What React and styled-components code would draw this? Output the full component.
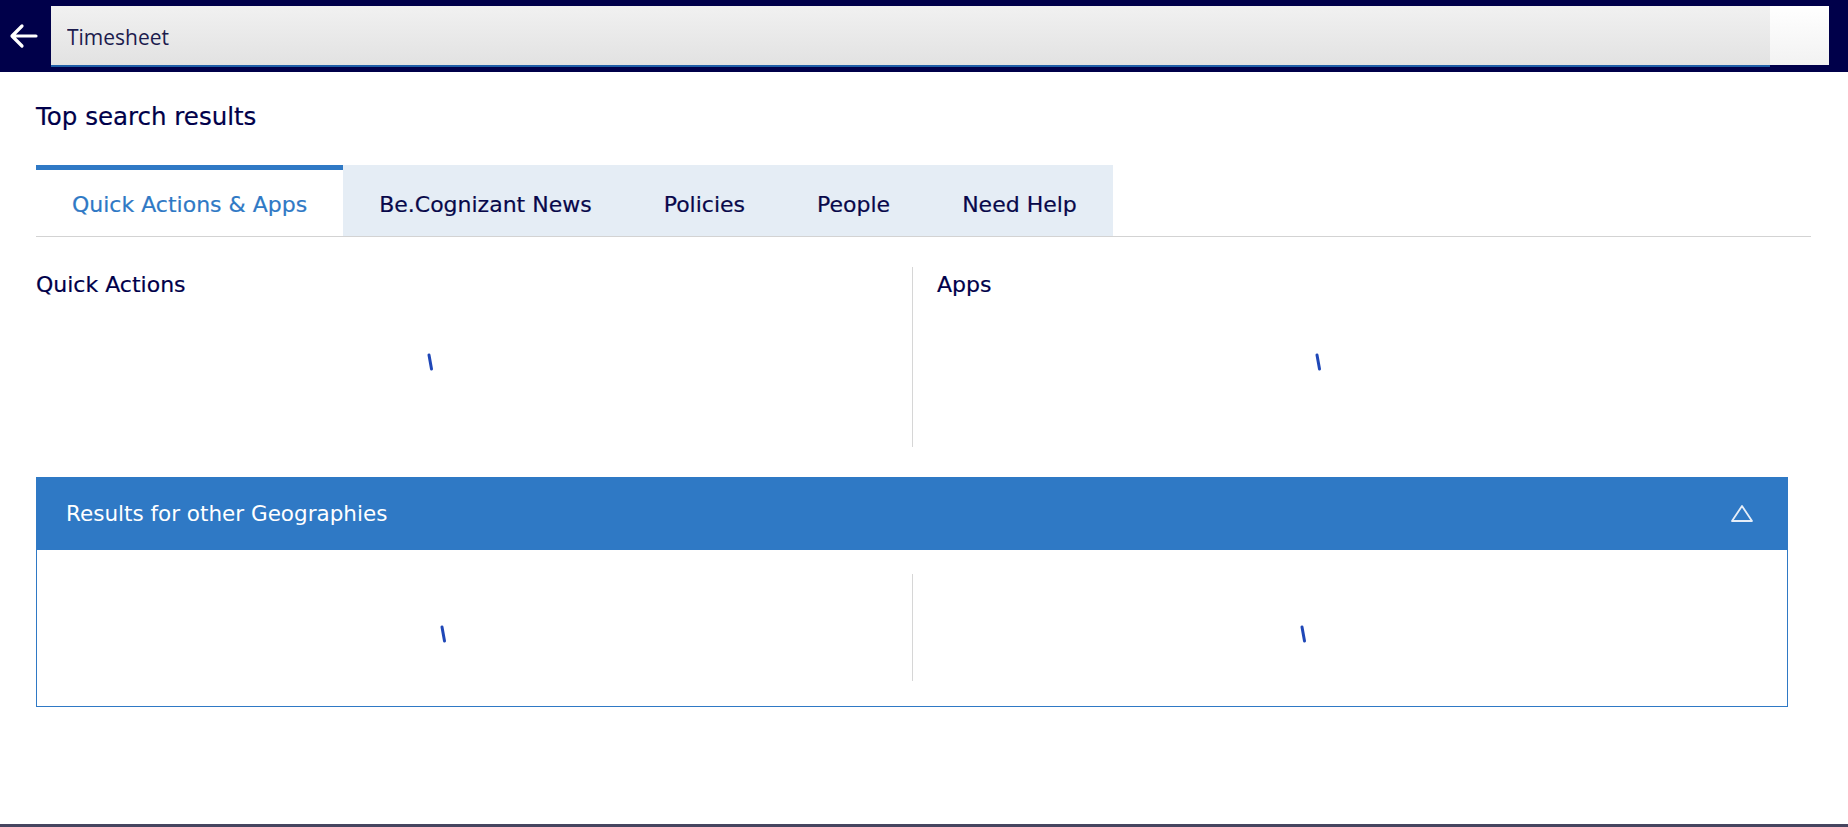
import React from "react";
import styled, { createGlobalStyle } from "styled-components";

const tabs = ["Quick Actions & Apps", "Be.Cognizant News", "Policies", "People", "Need Help"];

const App = () => {
  return (
    <Page>
      <GlobalStyle />
      <Header>
        <BackButton aria-label="Back">
          <svg width="30" height="26" viewBox="0 0 30 26" fill="none">
            <path d="M27 13H3.5M13 3L3 13L13 23" stroke="#fff" strokeWidth="3.2" strokeLinecap="round" strokeLinejoin="round" />
          </svg>
        </BackButton>
        <SearchInput defaultValue="Timesheet" />
        <SearchAddon />
      </Header>

      <Main>
        <Title>Top search results</Title>

        <TabBar>
          {tabs.map((name, idx) => (
            <Tab key={name} $active={idx === 0}>
              {name}
            </Tab>
          ))}
        </TabBar>

        <Sections>
          <Column>
            <Label>Quick Actions</Label>
            <Loader $top={51}>
              <Spinner dx={-43} />
            </Loader>
          </Column>
          <Column $divided>
            <Label>Apps</Label>
            <Loader $top={51}>
              <Spinner dx={-44} />
            </Loader>
          </Column>
        </Sections>

        <Accordion>
          <AccordionHeader>
            <span>Results for other Geographies</span>
            <svg width="24" height="19" viewBox="0 0 24 19" fill="none">
              <path d="M12 2L22 17H2Z" stroke="#e6eef8" strokeWidth="1.8" strokeLinejoin="round" />
            </svg>
          </AccordionHeader>
          <AccordionBody>
            <BodyColumn>
              <Loader $top={45}>
                <Spinner dx={-44} />
              </Loader>
            </BodyColumn>
            <BodyColumn $divided>
              <Loader $top={45}>
                <Spinner dx={-59} />
              </Loader>
            </BodyColumn>
          </AccordionBody>
        </Accordion>
      </Main>

      <BottomBar />
    </Page>
  );
};

// a single frame of the loading spinner: a short blue stroke
const Spinner = ({ dx }) => (
  <svg width="160" height="30" viewBox="0 0 160 30" fill="none">
    <path
      d={`M${78 + dx} 8L${80.5 + dx} 22`}
      stroke="#1f47b7"
      strokeWidth="3"
      strokeLinecap="round"
    />
  </svg>
);

export default App;

const GlobalStyle = createGlobalStyle`
  html, body {
    margin: 0;
    padding: 0;
    background: #fff;
  }
  body {
    font-family: "DejaVu Sans", "Liberation Sans", sans-serif;
    color: #00004a;
  }
  * {
    box-sizing: border-box;
  }
`;

const Page = styled.div`
  min-height: 100vh;
  display: flex;
  flex-direction: column;
`;

const Header = styled.header`
  height: 72px;
  background: #00004a;
  display: flex;
  align-items: flex-start;
  padding: 6px 19px 0 0;
`;

const BackButton = styled.button`
  width: 51px;
  height: 60px;
  border: none;
  background: transparent;
  padding: 0 4px 0 0;
  display: flex;
  align-items: center;
  justify-content: center;
`;

const SearchInput = styled.input`
  flex: 1;
  height: 61px;
  border: none;
  border-bottom: 2px solid #1f5fa8;
  background: linear-gradient(#f1f1f1, #e2e2e2);
  padding: 3px 16px 0;
  font-family: "Open Sans", "Liberation Sans", sans-serif;
  font-size: 21px;
  color: #1c1c4e;
  outline: none;
`;

const SearchAddon = styled.div`
  width: 59px;
  height: 59px;
  background: linear-gradient(#ffffff, #f2f2f2);
`;

const Main = styled.main`
  padding: 0 37px 0 36px;
`;

const Title = styled.h1`
  margin: 33px 0 0;
  font-size: 24.5px;
  line-height: 24px;
  font-weight: 400;
  color: #00004a;
  -webkit-text-stroke: 0.2px #00004a;
`;

const TabBar = styled.nav`
  margin-top: 36px;
  display: flex;
  border-bottom: 1px solid #d3d3d3;
`;

const Tab = styled.div`
  height: 71px;
  padding: 24px 36px 0;
  border-top: 5px solid ${({ $active }) => ($active ? "#2f79c5" : "transparent")};
  background: ${({ $active }) => ($active ? "#fff" : "#e5edf5")};
  color: ${({ $active }) => ($active ? "#2f79c5" : "#08084a")};
  font-size: 22px;
  line-height: 22px;
  white-space: nowrap;
  -webkit-text-stroke: 0.2px currentColor;
`;

const Sections = styled.section`
  margin-top: 30px;
  margin-right: 23px;
  display: grid;
  grid-template-columns: 1fr 1fr;
  height: 180px;
`;

const Column = styled.div`
  padding: 7px 0 0 ${({ $divided }) => ($divided ? "24px" : "0")};
  border-left: ${({ $divided }) => ($divided ? "1px solid #d6d6d6" : "none")};
`;

const Label = styled.h2`
  margin: 0;
  font-size: 22px;
  line-height: 22px;
  font-weight: 400;
  color: #00004a;
  -webkit-text-stroke: 0.2px #00004a;
`;

const Loader = styled.div`
  margin-top: ${({ $top }) => $top}px;
  height: 30px;
  display: flex;
  justify-content: center;
`;

const Accordion = styled.section`
  margin-top: 30px;
  margin-right: 23px;
`;

const AccordionHeader = styled.div`
  height: 73px;
  background: #2f79c5;
  color: #fff;
  display: flex;
  align-items: center;
  justify-content: space-between;
  padding: 0 34px 0 30px;
  font-size: 21.5px;
  line-height: 21.5px;
`;

const AccordionBody = styled.div`
  border: 1px solid #2f79c5;
  border-top: none;
  padding: 24px 0 25px;
  display: grid;
  grid-template-columns: 1fr 1fr;
`;

const BodyColumn = styled.div`
  height: 107px;
  padding-left: 26px;
  border-left: ${({ $divided }) => ($divided ? "1px solid #d6d6d6" : "none")};
`;

const BottomBar = styled.div`
  margin-top: auto;
  height: 3px;
  background: #46455f;
`;
